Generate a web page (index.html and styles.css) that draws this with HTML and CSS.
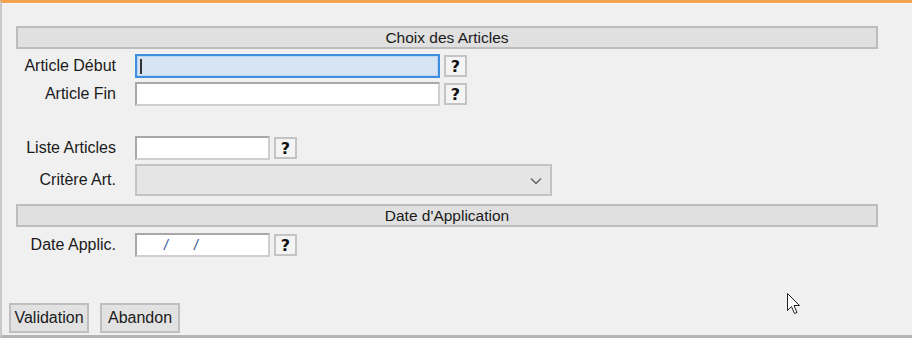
FILE: index.html
```html
<!DOCTYPE html>
<html lang="fr">
<head>
    <meta charset="UTF-8">
    <title>Choix des Articles</title>
    <link rel="stylesheet" href="styles.css">
</head>
<body>
    <div class="window">
        <div class="section-title">Choix des Articles</div>

        <div class="row first">
            <label class="field-label">Article Début</label>
            <div class="input wide focused"><span class="caret"></span></div>
            <button class="help-btn">?</button>
        </div>
        <div class="row">
            <label class="field-label">Article Fin</label>
            <div class="input wide"></div>
            <button class="help-btn">?</button>
        </div>

        <div class="row spaced">
            <label class="field-label">Liste Articles</label>
            <div class="input short"></div>
            <button class="help-btn">?</button>
        </div>
        <div class="row">
            <label class="field-label">Critère Art.</label>
            <div class="select-box">
                <svg class="chevron" width="12" height="8" viewBox="0 0 12 8">
                    <polyline points="1,1.5 6,6.5 11,1.5" fill="none" stroke="#606060" stroke-width="1.3"/>
                </svg>
            </div>
        </div>

        <div class="section-title second">Date d'Application</div>

        <div class="row date-row">
            <label class="field-label">Date Applic.</label>
            <div class="input short date-input">
                <span class="slash">/</span><span class="slash">/</span>
            </div>
            <button class="help-btn">?</button>
        </div>

        <div class="actions">
            <button class="action-btn">Validation</button>
            <button class="action-btn">Abandon</button>
        </div>

        <!-- mouse pointer seen in the capture -->
        <svg class="pointer" width="14" height="24" viewBox="0 0 14 24">
            <path d="M0.5 0.5 L0.5 17.5 L4.5 13.5 L7.5 20.5 L10 19.5 L7 12.5 L12.5 12.5 Z" fill="#fff" stroke="#222" stroke-width="1"/>
        </svg>
    </div>
</body>
</html>
```

FILE: styles.css
```css
* {
    margin: 0;
    padding: 0;
    box-sizing: border-box;
}

body {
    font-family: "Liberation Sans", Arial, sans-serif;
    font-size: 16px;
    color: #1a1a1a;
    background: #f0f0f0;
    width: 912px;
    height: 338px;
    overflow: hidden;
}

.window {
    position: relative;
    height: 338px;
    border-top: 3px solid #f4a24f;
    border-left: 2px solid #c9c9c9;
    border-bottom: 3px solid #b4b4b4;
    padding: 23px 0 0 14px;
    background: #f0f0f0;
    box-shadow: inset 0 1px 0 #fafafa;
}

.section-title {
    width: 862px;
    height: 23px;
    background: #e0e0e0;
    border: 2px solid #bdbdbd;
    text-align: center;
    line-height: 19px;
    font-size: 15.5px;
    color: #1a1a1a;
}

.section-title.second {
    margin-top: 8px;
}

.row {
    display: flex;
    align-items: center;
    margin-top: 4px;
}

.row.first {
    margin-top: 5px;
}

.row.spaced {
    margin-top: 30px;
}

.row.date-row {
    margin-top: 6px;
}

.field-label {
    width: 100px;
    text-align: right;
    margin-right: 19px;
    white-space: nowrap;
}

.input {
    height: 24px;
    background: #fff;
    border: 2px solid #a8a8a8;
    border-right-color: #cfcfcf;
    border-bottom-color: #cfcfcf;
    position: relative;
}

.input.wide {
    width: 305px;
}

.input.short {
    width: 135px;
}

.input.focused {
    background: #d6e4f3;
    border: 2px solid #3d8ee0;
    box-shadow: inset 0 0 0 1px #b8d4f2;
}

.caret {
    position: absolute;
    left: 3px;
    top: 3px;
    width: 2px;
    height: 15px;
    background: #333;
}

.help-btn {
    width: 23px;
    height: 22px;
    margin-left: 4px;
    background: #f4f4f4;
    border: 2px solid #c4c4c4;
    font-family: "DejaVu Sans", "Liberation Sans", sans-serif;
    font-weight: bold;
    font-size: 16px;
    line-height: 17px;
    color: #111;
}

.select-box {
    position: relative;
    width: 417px;
    height: 32px;
    background: #e5e5e5;
    border: 2px solid #c3c3c3;
}

.chevron {
    position: absolute;
    right: 8px;
    top: 11px;
}

.date-input {
    padding-left: 27px;
    display: flex;
    align-items: center;
}

.slash {
    color: #2a4a90;
    font-size: 14px;
    margin-right: 26px;
    font-style: italic;
}

.actions {
    display: flex;
    gap: 11px;
    margin-top: 46px;
    margin-left: -7px;
}

.action-btn {
    width: 80px;
    height: 30px;
    background: #e2e2e2;
    border: 2px solid #bfbfbf;
    font-family: "Liberation Sans", Arial, sans-serif;
    font-size: 16px;
    color: #1a1a1a;
}

.pointer {
    position: absolute;
    left: 785px;
    top: 290px;
}
```
